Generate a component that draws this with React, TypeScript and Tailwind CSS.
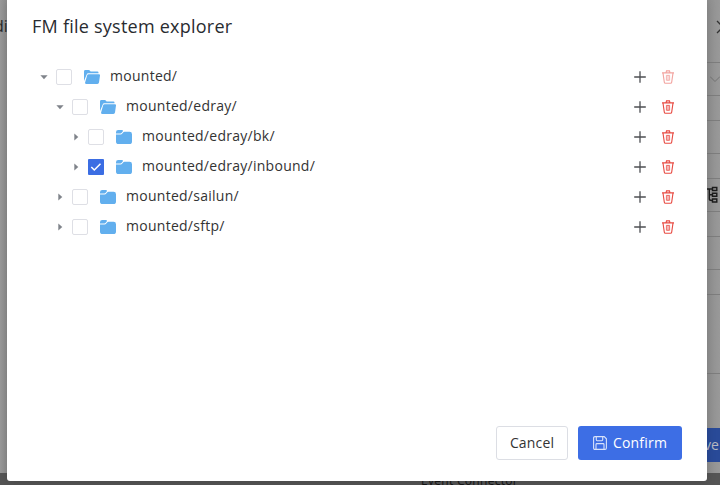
import React from 'react';

type Entry = { path: string; depth: number; open?: boolean; checked?: boolean; locked?: boolean };

const entries: Entry[] = [
  { path: 'mounted/', depth: 0, open: true, locked: true },
  { path: 'mounted/edray/', depth: 1, open: true },
  { path: 'mounted/edray/bk/', depth: 2 },
  { path: 'mounted/edray/inbound/', depth: 2, checked: true },
  { path: 'mounted/sailun/', depth: 1 },
  { path: 'mounted/sftp/', depth: 1 },
];

const indent = ['pl-0', 'pl-4', 'pl-8'];

function Caret({ open }: { open?: boolean }) {
  return (
    <svg className="h-4 w-4 shrink-0 fill-[#7f838a]" viewBox="0 0 16 16">
      {open ? <path d="M4.4 6.2h7.2L8 10.2z" /> : <path d="M6.3 4.4v7.2l4-3.6z" />}
    </svg>
  );
}

function Folder({ open }: { open?: boolean }) {
  return (
    <svg className="ml-3 h-4 w-4 shrink-0 fill-[#62afee]" viewBox="0 0 16 16">
      {open ? (
        <>
          <path d="M0 12V2.4Q0 1 1.4 1h3.4q.6 0 1 .5l.8.9h6.8q1.1 0 1.1 1.1v.8H4.4q-1.4 0-1.7 1.3z" />
          <path d="M4.7 5.2h10.2q1.3 0 1.1 1.2l-1 7.2q-.2 1.4-1.6 1.4H2.4Q.8 15 1.1 13.6L3.1 6.4q.3-1.2 1.6-1.2z" />
        </>
      ) : (
        <>
          <path d="M0 4.5V3.2Q0 1 2.2 1h3.4q1.9 0 1.3 1.2L5.9 3.6q-.6.9-1.6.9z" />
          <path d="M0 5.5h4.5q1.1 0 1.8-.9l.8-1.1q.5-.7 1.4-.7h5.1Q16 2.8 16 5.2v7.2q0 2.6-2.6 2.6H2.6Q0 15 0 12.4z" />
        </>
      )}
    </svg>
  );
}

function Checkbox({ checked }: { checked?: boolean }) {
  return checked ? (
    <span className="h-4 w-4 shrink-0 rounded-[1px] bg-[#3b6de3]">
      <svg className="h-4 w-4 fill-none stroke-white" viewBox="0 0 16 16" strokeWidth="1.5">
        <path d="m3.3 8 3 3 6.2-6.2" />
      </svg>
    </span>
  ) : (
    <span className="h-4 w-4 shrink-0 rounded-[2px] border border-[#dedfe5] bg-white" />
  );
}

function Trash({ locked }: { locked?: boolean }) {
  return (
    <svg
      className={`ml-[13px] h-4 w-4 fill-none stroke-[#e84a42] ${locked ? 'opacity-50' : ''}`}
      viewBox="0 0 16 16"
      strokeWidth="1.1"
    >
      <path d="M2 3.9h12M6 3.8l.5-1.9h3l.5 1.9M3 4.1l1.3 9q.1 1.1 1.2 1.1h5q1.1 0 1.2-1.1l1.3-9" />
      <path d="M6.4 6.4v4.9h3.2V6.4zM8 6.4v4.9" strokeWidth="0.8" />
    </svg>
  );
}

function Row({ entry }: { entry: Entry }) {
  return (
    <div className={`flex h-[30px] items-center ${indent[entry.depth]}`}>
      <Caret open={entry.open} />
      <span className="ml-1 flex">
        <Checkbox checked={entry.checked} />
      </span>
      <Folder open={entry.open} />
      <span className="mb-[4px] ml-[10px] whitespace-nowrap text-[14px] tracking-[0.27px] text-[#333]">{entry.path}</span>
      <svg className="ml-auto h-[14px] w-[14px] stroke-[#4d4f53]" viewBox="0 0 14 14" strokeWidth="1.3">
        <path d="M1.2 7h11.6M7 1.2v11.6" />
      </svg>
      <Trash locked={entry.locked} />
    </div>
  );
}

function Backdrop() {
  return (
    <div className="flex h-full flex-col bg-[#555]">
      <div className="flex h-[473px] shrink-0 justify-between bg-[#969696]">
        <div className="w-[7px] overflow-hidden bg-linear-to-r from-[#999] to-[#8d8d8d] pt-[14px] text-[16px] leading-6 text-[#292929]">
          <span className="-ml-[6px] whitespace-nowrap">di</span>
        </div>
        <div className="flex w-[13px] flex-col overflow-hidden bg-linear-to-r from-[#8f8f8f] to-[#999]">
          <div className="h-[63px] shrink-0 border-b border-[#7d7d7d] pt-[20px]">
            <svg className="ml-[9px] h-[14px] w-[14px] stroke-[#333]" viewBox="0 0 14 14" strokeWidth="1.3">
              <path d="m1 1 12 12M13 1 1 13" />
            </svg>
          </div>
          <div className="h-[33px] shrink-0 border-b border-[#7d7d7d] pt-[10px]">
            <svg className="ml-[3px] h-3 w-3 fill-none stroke-[#737373]" viewBox="0 0 12 12">
              <path d="m0 3.5 5 5 5-5" />
            </svg>
          </div>
          <div className="h-[25px] shrink-0 border-b border-[#7d7d7d]" />
          <div className="h-[33px] shrink-0 border-b border-[#7d7d7d]" />
          <div className="h-[25px] shrink-0 border-b border-[#7d7d7d]" />
          <div className="h-[33px] shrink-0 border-b border-[#7d7d7d] pt-[7px]">
            <svg className="h-[18px] w-[13px] fill-none stroke-[#1c1c1c]" viewBox="0 0 13 18" strokeWidth="1.4">
              <path d="M0 3h5M2.3 3v10q0 1.5 2.7 1.5M2.3 8.8H5M5.5 1.5h4.3v3H5.5zM5.5 7.2h4.3v3H5.5zM5.5 13h4.3v3H5.5z" />
            </svg>
          </div>
          <div className="h-[25px] shrink-0 border-b border-[#7d7d7d]" />
          <div className="h-[33px] shrink-0 border-b border-[#7d7d7d]" />
          <div className="h-[25px] shrink-0 border-b border-[#7d7d7d]" />
          <div className="h-[79px] shrink-0 border-b border-[#7d7d7d]" />
          <div className="h-[54px] shrink-0" />
          <div className="h-[34px] shrink-0 bg-[#294a98] text-[14px] leading-[34px] text-[#b6b9c1]">
            <span className="-ml-[3px]">ve</span>
          </div>
        </div>
      </div>
      <div className="h-3 overflow-hidden pl-[421px] text-[12px] leading-[16px] tracking-[0.3px] text-[#161616]">
        Event Connector
      </div>
    </div>
  );
}

export default function App() {
  return (
    <div className="relative h-[485px] w-[720px] overflow-hidden font-['Open_Sans','Noto_Sans',sans-serif]">
      <Backdrop />
      <div className="absolute top-0 left-[7px] flex h-[481px] w-[700px] flex-col rounded-b-[3px] bg-white px-[25px] shadow-[0_2px_10px_rgba(0,0,0,0.15)]">
        <h2 className="mt-[12px] h-7 text-[18px] leading-7 tracking-[0.24px] text-[#292b30]">FM file system explorer</h2>
        <div className="mt-[22px] flex flex-col pr-[6px] pl-1">
          {entries.map((entry) => (
            <Row key={entry.path} entry={entry} />
          ))}
        </div>
        <div className="mt-auto mb-[21px] flex justify-end gap-[10px]">
          <button className="h-[34px] w-[72px] rounded-[3px] border border-[#dcdee4] bg-white pb-[2px] text-[14px] tracking-[0.15px] text-[#333]">
            Cancel
          </button>
          <button className="flex h-[34px] w-[104px] items-center justify-center gap-[6px] rounded-[3px] bg-[#3d6ee5] text-[14px] text-white">
            <svg className="h-[14px] w-[14px] fill-none stroke-[#d8e2fa]" viewBox="0 0 14 14" strokeWidth="1.1">
              <path d="M.6 2Q.6.6 2 .6h9.2l2.2 2.2V12q0 1.4-1.4 1.4H2Q.6 13.4.6 12z" />
              <path d="M3.3.8v3q0 .9.9.9h4.6q.9 0 .9-.9v-3M3 13.2V8.5q0-.9.9-.9h6.2q.9 0 .9.9v4.7" />
            </svg>
            <span className="mb-[2px] tracking-[0.2px]">Confirm</span>
          </button>
        </div>
      </div>
    </div>
  );
}
